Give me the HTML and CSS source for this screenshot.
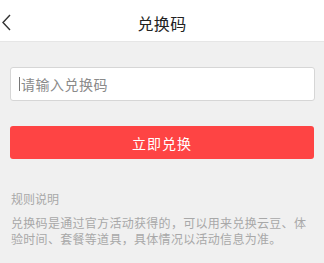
FILE: index.html
```html
<!DOCTYPE html>
<html lang="zh-CN">
<head>
<meta charset="utf-8">
<title>兑换码</title>
<link rel="stylesheet" href="styles.css">
</head>
<body>
<header class="topbar">
  <span class="back">
    <svg width="14" height="20" viewBox="0 0 14 20"><polyline points="10,3 3,10.5 10,18" fill="none" stroke="#333" stroke-width="1.4"/></svg>
  </span>
  <h1 class="title">兑换码</h1>
</header>
<main class="content">
  <div class="field"><span class="caret"></span><span class="placeholder">请输入兑换码</span></div>
  <button class="submit">立即兑换</button>
  <section class="rules">
    <h2 class="rules-title">规则说明</h2>
    <p class="rules-text">兑换码是通过官方活动获得的，可以用来兑换云豆、体验时间、套餐等道具，具体情况以活动信息为准。</p>
  </section>
</main>
</body>
</html>
```

FILE: styles.css
```css
* { box-sizing: border-box; }
html, body { margin: 0; padding: 0; }
body {
  background: #f0f0f0;
  font-family: "Noto Sans CJK SC", "Noto Sans", sans-serif;
  width: 324px;
  height: 263px;
  overflow: hidden;
}
.topbar {
  position: relative;
  height: 42px;
  background: #fff;
  border-bottom: 1px solid #e6e6e6;
  display: flex;
  align-items: center;
  justify-content: center;
  padding-top: 4px;
}
.back {
  position: absolute;
  left: 0;
  top: 12px;
  display: flex;
}
.title {
  margin: 0;
  font-size: 16px;
  font-weight: normal;
  color: #222;
  line-height: 20px;
  letter-spacing: 0.3px;
}
.content {
  display: flex;
  flex-direction: column;
}
.field {
  margin: 25px 9px 0 10px;
  height: 34px;
  background: #fff;
  border: 1px solid #d6d6d6;
  border-radius: 3px;
  display: flex;
  align-items: center;
  padding-left: 8px;
}
.caret {
  width: 1px;
  height: 14px;
  background: #777;
  margin-right: 1px;
}
.placeholder {
  font-size: 14px;
  letter-spacing: 0.5px;
  color: #8a8a8a;
}
.submit {
  margin: 25px 10px 0 10px;
  height: 33px;
  border: none;
  border-radius: 3px;
  background: #fe4444;
  color: #fff;
  font-family: inherit;
  font-size: 14px;
  letter-spacing: 1px;
  padding: 0;
}
.rules {
  margin: 32px 0 0 0;
  padding: 0 12px 0 11px;
  color: #a8a8a8;
}
.rules-title {
  margin: 0;
  font-size: 12px;
  font-weight: normal;
  line-height: 16px;
}
.rules-text {
  margin: 8px 0 0 0;
  font-size: 12px;
  line-height: 16px;
  letter-spacing: 0.3px;
}
```
